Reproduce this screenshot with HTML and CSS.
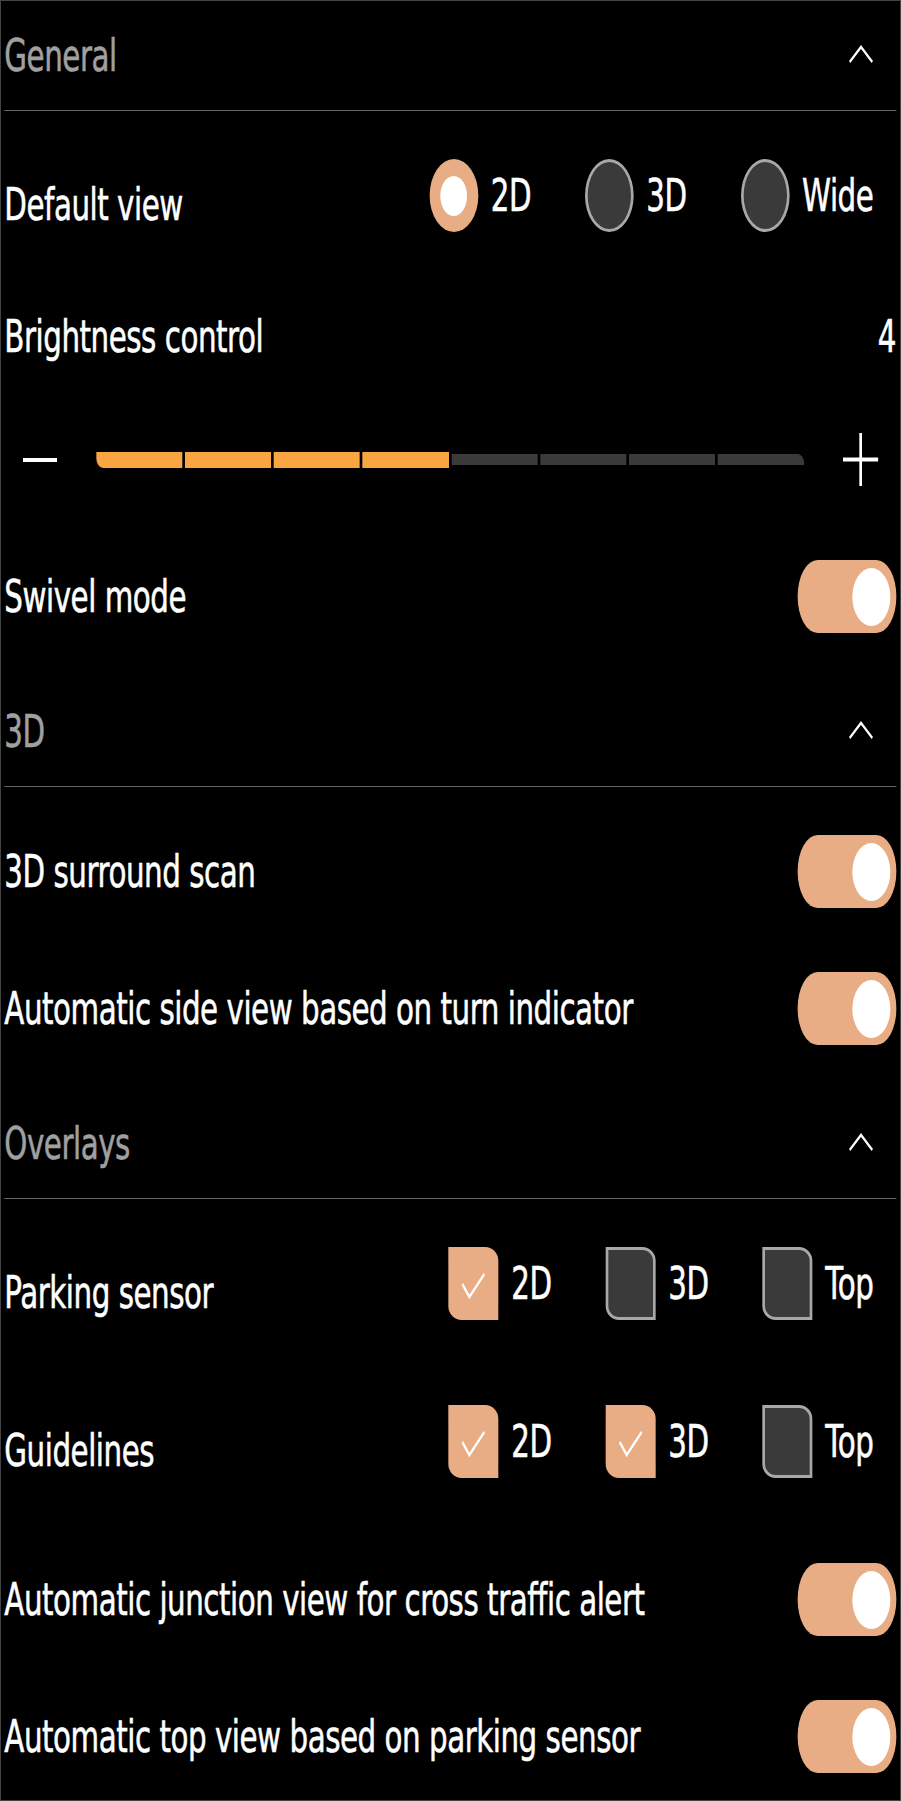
FILE: index.html
```html
<!DOCTYPE html>
<html lang="en">
<head>
<meta charset="utf-8">
<title>Camera settings</title>
<link rel="stylesheet" href="styles.css">
</head>
<body>
<div class="frame">
  <div class="content">
    <section class="section">
      <div class="sec-head">
        <span class="sec-title">General</span>
        <svg class="chev" viewBox="0 0 38 19"><polyline points="2,17 19,2 36,17"/></svg>
      </div>
      <div class="row row-opt first">
        <span class="row-label">Default view</span>
        <div class="options">
          <div class="opt"><span class="radio on"><span class="dot"></span></span><span class="opt-label">2D</span></div>
          <div class="opt"><span class="radio"></span><span class="opt-label">3D</span></div>
          <div class="opt"><span class="radio"></span><span class="opt-label">Wide</span></div>
        </div>
      </div>
      <div class="row row-bright">
        <span class="row-label">Brightness control</span>
        <span class="value">4</span>
      </div>
      <div class="slider">
        <span class="minus"></span>
        <div class="track">
          <span class="seg on"></span><span class="seg on"></span><span class="seg on"></span><span class="seg on"></span>
          <span class="seg"></span><span class="seg"></span><span class="seg"></span><span class="seg"></span>
        </div>
        <svg class="plus" viewBox="0 0 53 53"><rect x="0" y="24.5" width="53" height="4"/><rect x="24.5" y="0" width="4" height="53"/></svg>
      </div>
      <div class="row row-toggle after-slider">
        <span class="row-label">Swivel mode</span>
        <span class="toggle"><span class="knob"></span></span>
      </div>
    </section>

    <section class="section">
      <div class="sec-head">
        <span class="sec-title">3D</span>
        <svg class="chev" viewBox="0 0 38 19"><polyline points="2,17 19,2 36,17"/></svg>
      </div>
      <div class="row row-toggle first">
        <span class="row-label">3D surround scan</span>
        <span class="toggle"><span class="knob"></span></span>
      </div>
      <div class="row row-toggle">
        <span class="row-label">Automatic side view based on turn indicator</span>
        <span class="toggle"><span class="knob"></span></span>
      </div>
    </section>

    <section class="section">
      <div class="sec-head">
        <span class="sec-title">Overlays</span>
        <svg class="chev" viewBox="0 0 38 19"><polyline points="2,17 19,2 36,17"/></svg>
      </div>
      <div class="row row-opt first">
        <span class="row-label">Parking sensor</span>
        <div class="options">
          <div class="opt"><span class="check on"><svg viewBox="0 0 75 73"><polyline points="21,37 31.5,50 54,27"/></svg></span><span class="opt-label">2D</span></div>
          <div class="opt"><span class="check"></span><span class="opt-label">3D</span></div>
          <div class="opt"><span class="check"></span><span class="opt-label">Top</span></div>
        </div>
      </div>
      <div class="row row-opt after-check">
        <span class="row-label">Guidelines</span>
        <div class="options">
          <div class="opt"><span class="check on"><svg viewBox="0 0 75 73"><polyline points="21,37 31.5,50 54,27"/></svg></span><span class="opt-label">2D</span></div>
          <div class="opt"><span class="check on"><svg viewBox="0 0 75 73"><polyline points="21,37 31.5,50 54,27"/></svg></span><span class="opt-label">3D</span></div>
          <div class="opt"><span class="check"></span><span class="opt-label">Top</span></div>
        </div>
      </div>
      <div class="row row-toggle after-check">
        <span class="row-label">Automatic junction view for cross traffic alert</span>
        <span class="toggle"><span class="knob"></span></span>
      </div>
      <div class="row row-toggle">
        <span class="row-label">Automatic top view based on parking sensor</span>
        <span class="toggle"><span class="knob"></span></span>
      </div>
    </section>
  </div>
</div>
</body>
</html>
```

FILE: styles.css
```css
html, body {
  margin: 0;
  padding: 0;
  background: #000;
}

.frame {
  width: 901px;
  height: 1801px;
  box-sizing: border-box;
  border: 1px solid #444;
  overflow: hidden;
  background: #000;
}

/* the display is drawn in a horizontally condensed space */
.content {
  width: 1348.5px;
  box-sizing: border-box;
  padding: 0 6px 0 5px;
  transform: scaleX(0.666667);
  transform-origin: 0 0;
  font-family: "DejaVu Sans", sans-serif;
  font-size: 44px;
  letter-spacing: -0.7px;
  line-height: 52px;
  color: #fff;
  -webkit-text-stroke: 0.6px currentColor;
}

.sec-head {
  display: flex;
  justify-content: space-between;
  align-items: flex-start;
  padding: 73px 0 28px 0;
  border-bottom: 1px solid #666;
}

.section:first-child .sec-head {
  padding-top: 29px;
}

.sec-title {
  color: #a0a0a0;
}

.chev {
  width: 38px;
  height: 19px;
  margin-top: 15px;
  margin-right: 34px;
  fill: none;
  stroke: #fff;
  stroke-width: 3;
}

.row {
  display: flex;
  justify-content: space-between;
}

.row.first {
  margin-top: 48px;
}

.row-opt {
  align-items: flex-start;
  height: 73px;
}

.row-opt .row-label {
  margin-top: 20px;
}

.row-toggle {
  align-items: center;
  height: 73px;
  margin-top: 64px;
}

.row-toggle.after-slider {
  margin-top: 74px;
}

.row.after-check {
  margin-top: 85px;
}

.row-bright {
  margin-top: 79px;
  align-items: flex-start;
}

.options {
  display: flex;
  gap: 81px;
  margin-right: 34px;
}

.opt {
  display: flex;
  align-items: center;
  gap: 19px;
}

.radio {
  width: 73px;
  height: 73px;
  box-sizing: border-box;
  border-radius: 50%;
  background: #3a3a3a;
  border: 3px solid #a8a8a8;
  border-left-width: 4.5px;
  border-right-width: 4.5px;
  display: flex;
  align-items: center;
  justify-content: center;
}

.radio.on {
  background: #e8ad85;
  border: none;
}

.dot {
  width: 40px;
  height: 40px;
  border-radius: 50%;
  background: #fff;
}

.check {
  width: 75px;
  height: 73px;
  box-sizing: border-box;
  border-radius: 0 20px 0 20px / 0 14px 0 14px;
  background: #3a3a3a;
  border: 3px solid #a8a8a8;
  border-left-width: 4.5px;
  border-right-width: 4.5px;
}

.check.on {
  background: #e8ad85;
  border: none;
}

.check svg {
  display: block;
  width: 75px;
  height: 73px;
  fill: none;
  stroke: #fff;
  stroke-width: 3;
}

.slider {
  display: flex;
  align-items: center;
  height: 53px;
  margin-top: 70px;
  padding: 0 26.5px 0 28px;
  gap: 58.5px;
}

.minus {
  width: 51px;
  height: 4px;
  background: #fff;
  flex: none;
}

.track {
  flex: 1;
  display: flex;
  align-items: center;
  gap: 4px;
}

.seg {
  flex: 1;
  height: 11px;
  background: #3a3a3a;
}

.seg.on {
  height: 16px;
  background: #f9a541;
}

.seg:first-child {
  border-bottom-left-radius: 10px;
}

.seg:last-child {
  border-top-right-radius: 10px;
}

.plus {
  width: 53px;
  height: 53px;
  flex: none;
  fill: #fff;
}

.toggle {
  width: 148px;
  height: 73px;
  flex: none;
  box-sizing: border-box;
  border-radius: 30px / 36px;
  background: #e8ad85;
  display: flex;
  align-items: center;
  justify-content: flex-end;
  padding-right: 9px;
}

.knob {
  width: 57px;
  height: 58px;
  border-radius: 50%;
  background: #fff;
}
```
